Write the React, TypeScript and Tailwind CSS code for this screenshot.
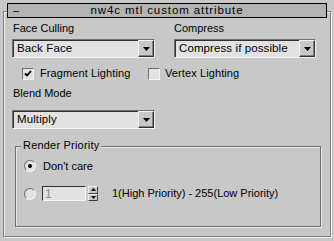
function Combo({ value, width }: { value: string; width: string }) {
  return (
    <div
      className={`${width} h-[19px] flex items-stretch bg-[#e2e2e2] border-t border-l border-[#707070] border-r border-b border-r-[#f4f4f4] border-b-[#f4f4f4]`}
    >
      <div className="flex-1 flex items-center pl-[3px] text-[11.5px] tracking-[0.1px] border-t border-l border-[#303030]">
        {value}
      </div>
      <div className="w-[16px] flex items-center justify-center bg-[#c8c8c8] border-t border-l border-t-[#f4f4f4] border-l-[#f4f4f4] border-r border-b border-r-[#303030] border-b-[#303030] shadow-[inset_-1px_-1px_0_#808080]">
        <svg width="7" height="4" viewBox="0 0 7 4">
          <path d="M0 0h7L3.5 4z" fill="#000" />
        </svg>
      </div>
    </div>
  );
}

function Check({ checked }: { checked?: boolean }) {
  return (
    <div className="w-[12px] h-[12px] bg-[#e2e2e2] border-t border-l border-[#707070] border-r border-b border-r-[#f4f4f4] border-b-[#f4f4f4] flex items-center justify-center">
      {checked && (
        <svg width="8" height="8" viewBox="0 0 8 8">
          <path d="M1 3.5l2 2 4-4.5" stroke="#000" strokeWidth="1.8" fill="none" />
        </svg>
      )}
    </div>
  );
}

function Radio({ on }: { on?: boolean }) {
  return (
    <div className="w-[12px] h-[12px] rounded-full bg-[#e2e2e2] border border-t-[#707070] border-l-[#707070] border-r-[#f4f4f4] border-b-[#f4f4f4] flex items-center justify-center">
      {on && <div className="w-[4px] h-[4px] rounded-full bg-black" />}
    </div>
  );
}

export default function App() {
  return (
    <div className="w-[334px] h-[241px] bg-[#c8c8c8] pt-[11px] px-[3px] font-['Liberation_Sans',Arial,sans-serif] text-[11px] text-black leading-none">
      <div className="h-[226px] border border-t-[#808080] border-l-[#808080] border-r-[#808080] border-b-[#808080] shadow-[inset_1px_1px_0_#f0f0f0,1px_1px_0_#f0f0f0]">
        <div className="mx-[3px] -mt-[9px] h-[15px] bg-[#b4b4b4] border border-black flex items-center">
          <span className="w-[20px] pl-[5px] text-[11px]">–</span>
          <span className="flex-1 text-center pr-[20px] text-[11.5px] tracking-[0.9px]">nw4c mtl custom attribute</span>
        </div>

        <div className="pl-[8px] pr-[10px]">
          <div className="flex">
            <div className="w-[162px]">
              <div className="pl-[1px] pt-[5px] h-[21px]">Face Culling</div>
              <Combo value="Back Face" width="w-[143px]" />
            </div>
            <div>
              <div className="pt-[5px] h-[21px]">Compress</div>
              <Combo value="Compress if possible" width="w-[142px]" />
            </div>
          </div>

          <div className="flex items-center h-[13px] mt-[9px] pl-[10px]">
            <Check checked />
            <span className="ml-[6px] tracking-[0.1px] w-[108px]">Fragment Lighting</span>
            <Check />
            <span className="ml-[5px] tracking-[0.1px]">Vertex Lighting</span>
          </div>

          <div className="pl-[1px] pt-[8px] h-[30px]">Blend Mode</div>
          <Combo value="Multiply" width="w-[143px]" />

          <div className="relative mt-[17px] ml-[3px] w-[306px] h-[81px] border border-[#707070] shadow-[inset_1px_1px_0_#e8e8e8,1px_1px_0_#e8e8e8]">
            <span className="absolute -top-[7px] left-[5px] bg-[#c8c8c8] px-[2px] tracking-[0.2px]">Render Priority</span>
            <div className="flex items-center mt-[13px] ml-[8px]">
              <Radio on />
              <span className="ml-[7px]">Don't care</span>
            </div>
            <div className="flex items-center mt-[14px] ml-[8px]">
              <Radio />
              <div className="ml-[6px] w-[44px] h-[15px] bg-[#e2e2e2] border-t border-l border-[#303030] border-r border-b border-r-[#f4f4f4] border-b-[#f4f4f4] text-[#909090] text-[12px] pl-[2px] flex items-center">
                1
              </div>
              <div className="ml-[2px] w-[10px] h-[15px] flex flex-col">
                <div className="flex-1 flex items-center justify-center border border-t-[#f4f4f4] border-l-[#f4f4f4] border-r-[#404040] border-b-[#404040]">
                  <svg width="5" height="3" viewBox="0 0 5 3"><path d="M2.5 0L5 3H0z" fill="#000" /></svg>
                </div>
                <div className="flex-1 flex items-center justify-center border border-t-[#f4f4f4] border-l-[#f4f4f4] border-r-[#404040] border-b-[#404040]">
                  <svg width="5" height="3" viewBox="0 0 5 3"><path d="M0 0h5L2.5 3z" fill="#000" /></svg>
                </div>
              </div>
              <span className="ml-[14px] text-[11px]">1(High Priority) - 255(Low Priority)</span>
            </div>
          </div>
        </div>
      </div>
    </div>
  );
}
